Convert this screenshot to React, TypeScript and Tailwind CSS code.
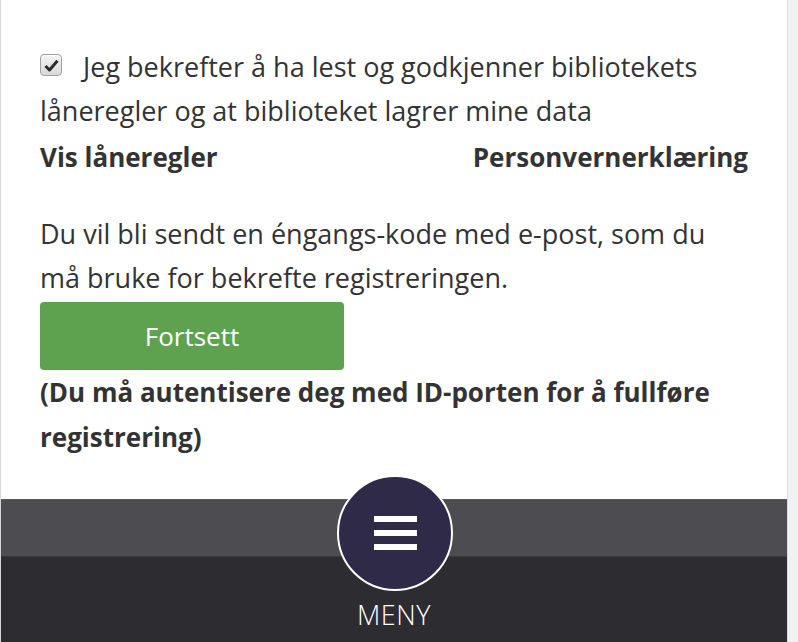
import React, { useState } from 'react';

const CheckBox = ({ checked, onToggle }: { checked: boolean; onToggle: () => void }) => (
  <button
    onClick={onToggle}
    className="mt-[9px] h-[22px] w-[22px] shrink-0 rounded-[4px] border border-[#a0a0a0] bg-gradient-to-b from-[#f4f4f4] to-[#d8d8d8] flex items-center justify-center shadow-[inset_0_1px_0_#fff]"
  >
    {checked && (
      <svg width="15" height="13" viewBox="0 0 15 13">
        <path d="M1.5 7 L5.5 11 L13.5 1.8" fill="none" stroke="#2b2b2b" strokeWidth="3" strokeLinejoin="round" />
      </svg>
    )}
  </button>
);

const App = () => {
  const [accepted, setAccepted] = useState(true);

  return (
    <div className="flex h-[642px] w-[798px] overflow-hidden bg-white text-[#333333] [font-family:'Open_Sans','Liberation_Sans',sans-serif]">
      <div className="flex w-[787px] flex-col border-l border-[#d6d6d6]">
        <div className="flex-1 pl-[39px] pr-[39px] pt-[45px] text-[27px] leading-[44px]">
          <div className="flex gap-[21px]">
            <CheckBox checked={accepted} onToggle={() => setAccepted(!accepted)} />
            <span>Jeg bekrefter å ha lest og godkjenner bibliotekets</span>
          </div>
          <p>låneregler og at biblioteket lagrer mine data</p>
          <div className="mt-[2px] flex justify-between text-[26px] font-bold">
            <a href="#">Vis låneregler</a>
            <a href="#">Personvernerklæring</a>
          </div>

          <p className="mt-[33px]">
            Du vil bli sendt en éngangs-kode med e-post, som du
            <br />
            må bruke for bekrefte registreringen.
          </p>
          <button className="mt-[2px] h-[68px] w-[304px] rounded-[4px] bg-[#5ea250] text-[26px] text-white">
            Fortsett
          </button>
          <p className="text-[26px] font-bold leading-[45px]">
            (Du må autentisere deg med ID-porten for å fullføre
            <br />
            registrering)
          </p>
        </div>

        <footer className="relative h-[143px] shrink-0">
          <div className="h-[57px] border-t border-[#5a595e] bg-[#4d4c51]" />
          <div className="h-[86px] border-t border-[#3a393e] bg-[#2d2c31] flex items-end justify-center pb-[14px]">
            <span className="text-[27px] font-light leading-none tracking-[0.5px] text-white">MENY</span>
          </div>
          <button className="absolute left-[336px] top-[-24px] flex h-[116px] w-[116px] flex-col items-center justify-center gap-[8px] rounded-full border-2 border-white bg-[#2e2a48]">
            <span className="block h-[6px] w-[43px] bg-white" />
            <span className="block h-[6px] w-[43px] bg-white" />
            <span className="block h-[6px] w-[43px] bg-white" />
          </button>
        </footer>
      </div>
      <div className="w-[11px] border-l border-[#dcdcdc] bg-[#f1f1f1]" />
    </div>
  );
};

export default App;
